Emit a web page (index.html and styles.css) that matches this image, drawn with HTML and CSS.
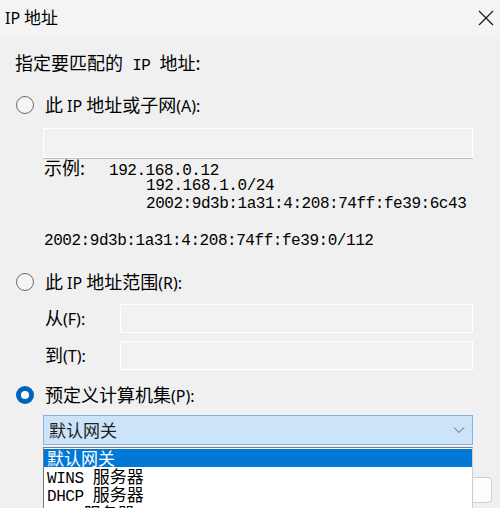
FILE: index.html
```html
<!DOCTYPE html>
<html lang="zh-CN">
<head>
    <meta charset="UTF-8">
    <title>IP 地址</title>
    <link rel="stylesheet" href="styles.css">
</head>
<body>

    <div class="titlebar">
        <span class="title"><span class="lat">IP</span> 地址</span>
        <svg class="close" width="16" height="16" viewBox="0 0 16 16">
            <path d="M1 1 L15 15 M15 1 L1 15" stroke="#1a1a1a" stroke-width="1.2" fill="none"/>
        </svg>
    </div>

    <div class="main">
        <div class="prompt">指定要匹配的<span class="mono"> IP </span>地址:</div>

        <div class="radio-row">
            <span class="radio"></span>
            <span class="lbl">此 <span class="lat">IP</span> 地址或子网<span class="lat">(A):</span></span>
        </div>
        <div class="textbox wide"></div>

        <div class="examples">
            <div class="line"><span class="ex-label">示例:</span><span class="mono">192.168.0.12</span></div>
            <div class="line indent mono">192.168.1.0/24</div>
            <div class="line indent mono">2002:9d3b:1a31:4:208:74ff:fe39:6c43</div>
            <div class="line"></div>
            <div class="line mono">2002:9d3b:1a31:4:208:74ff:fe39:0/112</div>
        </div>

        <div class="radio-row second">
            <span class="radio"></span>
            <span class="lbl">此 <span class="lat">IP</span> 地址范围<span class="lat">(R):</span></span>
        </div>
        <div class="range-row from">
            <span class="lbl">从<span class="lat">(F):</span></span>
            <div class="textbox range"></div>
        </div>
        <div class="range-row to">
            <span class="lbl">到<span class="lat">(T):</span></span>
            <div class="textbox range"></div>
        </div>

        <div class="radio-row third">
            <span class="radio checked"></span>
            <span class="lbl">预定义计算机集<span class="lat">(P):</span></span>
        </div>
        <div class="select">
            <span>默认网关</span>
            <svg width="12" height="8" viewBox="0 0 12 8">
                <polyline points="1,1.5 6,6.5 11,1.5" stroke="#5a5a5a" stroke-width="1" fill="none"/>
            </svg>
        </div>

        <div class="footer">
            <div class="button"></div>
        </div>
    </div>

    <ul class="dropdown">
        <li class="active">默认网关</li>
        <li><span class="mono">WINS </span>服务器</li>
        <li><span class="mono">DHCP </span>服务器</li>
        <li><span class="mono">DNS </span>服务器</li>
    </ul>

</body>
</html>
```

FILE: styles.css
```css
body { margin: 0; width: 500px; height: 508px; overflow: hidden; position: relative; background: #f0f0f0; color: #000; font-family: "Noto Sans CJK SC", "Noto Sans", sans-serif; }
.lat { font-family: "Noto Sans", "Noto Sans CJK SC", sans-serif; font-size: 16px; }
.mono { font-family: "Liberation Mono", "Noto Sans CJK SC", monospace; font-size: 16px; letter-spacing: -0.45px; }

.titlebar { height: 38px; display: flex; align-items: center; justify-content: space-between; padding: 0 6px 3px 5px; box-sizing: border-box; background: #f4f4f5; }
.title { font-size: 17px; line-height: 20px; }
.title .lat { font-size: 16px; }

.main { padding: 0 27px 0 15px; }
.prompt { margin-top: 14px; height: 20px; line-height: 20px; font-size: 18px; }
.radio-row { display: flex; align-items: center; gap: 11px; height: 20px; margin-top: 23px; }
.radio-row.second { margin-top: 21px; }
.radio-row.third { margin-top: 15px; }
.radio { width: 18px; height: 18px; margin-left: 1px; box-sizing: border-box; border: 1px solid #6b6b6b; border-radius: 50%; background: #f5f5f5; position: relative; }
.radio.checked { border: none; background: #0063b8; }
.radio.checked::after { content: ""; position: absolute; left: 5px; top: 5px; width: 8px; height: 8px; border-radius: 50%; background: #fff; }
.lbl { font-size: 18px; line-height: 20px; }

.textbox { height: 30px; box-sizing: border-box; border: 1px solid #fff; background: #f2f2f2; }
.textbox.wide { margin: 13px 0 0 28px; box-shadow: 0 1px 0 #bcbcbc; }
.textbox.range { width: 353px; height: 29px; }

.examples { margin: 0 0 0 29px; }
.line { height: 18.5px; line-height: 18px; white-space: pre; }
.ex-label { display: inline-block; width: 65px; font-size: 18px; }
.indent { padding-left: 102px; }

.range-row { display: flex; align-items: center; justify-content: space-between; margin-left: 30px; }
.range-row.from { margin-top: 12px; }
.range-row.to { margin-top: 8px; }

.select { margin: 10px 0 0 28px; height: 30px; box-sizing: border-box; border: 1px solid #7fb3e6; background: #cce4f7; display: flex; align-items: center; justify-content: space-between; padding: 0 7px 0 5px; font-size: 17px; color: #222; }

.footer { display: flex; justify-content: flex-end; margin: 32px -19px 0 0; }
.button { width: 80px; height: 26px; box-sizing: border-box; border: 1px solid #d0d0d0; border-radius: 4px; background: #fdfdfd; }

.dropdown { position: absolute; left: 43px; top: 447px; width: 430px; margin: 0; padding: 1px 0 0; list-style: none; box-sizing: border-box; background: #fff; border: 1px solid #7a7a7a; border-right-color: #cdcdcd; }
.dropdown li { height: 18.5px; line-height: 18.5px; padding-left: 3px; font-size: 17px; white-space: pre; }
.dropdown li.active { background: #0078d7; color: #fff; height: 17.5px; line-height: 17.5px; }
```
